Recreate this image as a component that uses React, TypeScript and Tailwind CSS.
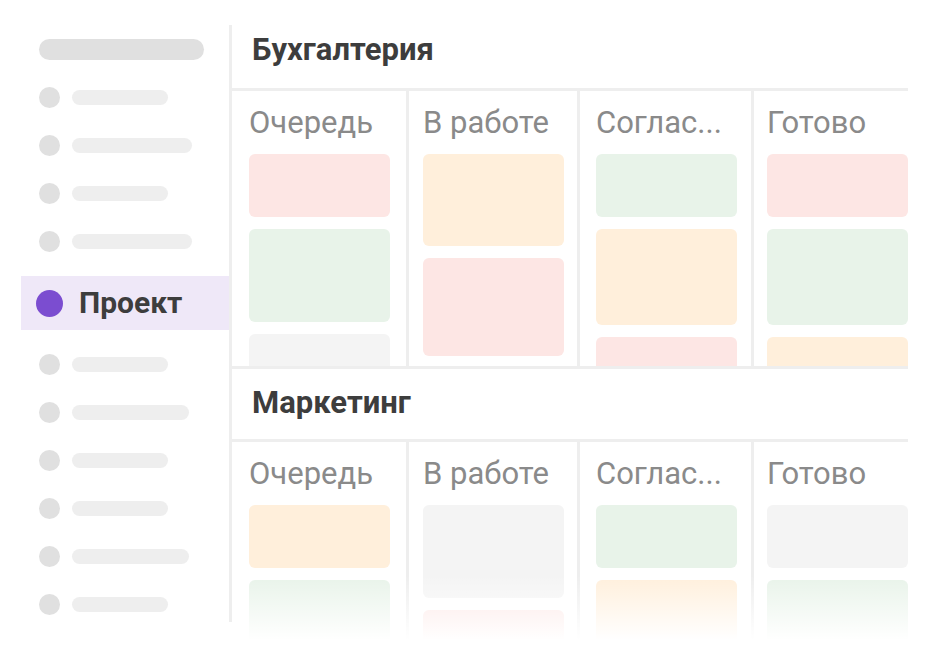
type Tone = "red" | "green" | "orange" | "gray";

type Card = { tone: Tone; h: string };

type Column = {
  title: string;
  box: string;
  cards: Card[];
};

const tones: Record<Tone, string> = {
  red: "bg-[#fde6e4]",
  green: "bg-[#e8f3e9]",
  orange: "bg-[#ffefdb]",
  gray: "bg-[#f4f4f4]",
};

const colBoxes = [
  "w-[177px] pl-[17px] border-r-[3px] border-[#eeeeee]",
  "w-[171px] pl-[14px] border-r-[3px] border-[#eeeeee]",
  "w-[174px] pl-[16px] border-r-[3px] border-[#eeeeee]",
  "flex-1 pl-[13px]",
];

const titles = ["Очередь", "В работе", "Соглас...", "Готово"];

const makeColumns = (cards: Card[][]): Column[] =>
  cards.map((c, i) => ({ title: titles[i], box: colBoxes[i], cards: c }));

const accounting = makeColumns([
  [
    { tone: "red", h: "h-[63px]" },
    { tone: "green", h: "h-[93px]" },
    { tone: "gray", h: "h-[90px]" },
  ],
  [
    { tone: "orange", h: "h-[92px]" },
    { tone: "red", h: "h-[98px]" },
  ],
  [
    { tone: "green", h: "h-[63px]" },
    { tone: "orange", h: "h-[96px]" },
    { tone: "red", h: "h-[90px]" },
  ],
  [
    { tone: "red", h: "h-[63px]" },
    { tone: "green", h: "h-[96px]" },
    { tone: "orange", h: "h-[90px]" },
  ],
]);

const marketing = makeColumns([
  [
    { tone: "orange", h: "h-[63px]" },
    { tone: "green", h: "h-[90px]" },
  ],
  [
    { tone: "gray", h: "h-[93px]" },
    { tone: "red", h: "h-[90px]" },
  ],
  [
    { tone: "green", h: "h-[63px]" },
    { tone: "orange", h: "h-[90px]" },
  ],
  [
    { tone: "gray", h: "h-[63px]" },
    { tone: "green", h: "h-[90px]" },
  ],
]);

const upperRows = ["w-[96px]", "w-[120px]", "w-[96px]", "w-[120px]"];
const lowerRows = [
  "w-[96px]",
  "w-[117px]",
  "w-[96px]",
  "w-[96px]",
  "w-[117px]",
  "w-[96px]",
];

const SkeletonRow = ({ width }: { width: string }) => (
  <div className="h-[48px] shrink-0 flex items-center pl-[18px] gap-[12px]">
    <div className="w-[21px] h-[21px] rounded-full bg-[#e0e0e0]" />
    <div className={`h-[15px] rounded-full bg-[#eeeeee] ${width}`} />
  </div>
);

const Sidebar = () => (
  <div className="w-[211px] h-[597px] shrink-0 border-r-[3px] border-[#eeeeee] pt-[14px] flex flex-col">
    <div className="ml-[18px] w-[165px] h-[21px] shrink-0 rounded-full bg-[#e0e0e0] mb-[13px]" />
    {upperRows.map((w, i) => (
      <SkeletonRow key={i} width={w} />
    ))}
    <div className="mt-[11px] mb-[10px] h-[54px] shrink-0 bg-[#efe8f8] flex items-center pl-[15px] gap-[16px]">
      <div className="w-[27px] h-[27px] rounded-full bg-[#7b4dd0]" />
      <span className="text-[30px] leading-[30px] font-bold text-[#3d3d3d]">
        Проект
      </span>
    </div>
    {lowerRows.map((w, i) => (
      <SkeletonRow key={i} width={w} />
    ))}
  </div>
);

const BoardColumns = ({ columns }: { columns: Column[] }) => (
  <div className="flex h-full">
    {columns.map((col) => (
      <div key={col.title} className={`${col.box} pt-[17px] overflow-hidden`}>
        <div className="text-[31px] leading-[30px] text-[#8a8a8a] whitespace-nowrap">
          {col.title}
        </div>
        <div className="mt-[16px] flex flex-col gap-[12px]">
          {col.cards.map((card, i) => (
            <div
              key={i}
              className={`w-[141px] shrink-0 rounded-[6px] ${tones[card.tone]} ${card.h}`}
            />
          ))}
        </div>
      </div>
    ))}
  </div>
);

export default function App() {
  return (
    <div
      className="w-[942px] h-[660px] bg-white flex pt-[25px] pl-[21px] overflow-hidden"
      style={{ fontFamily: "Roboto, 'Noto Sans', sans-serif" }}
    >
      <Sidebar />
      <div className="relative w-[676px] flex flex-col">
        <div className="h-[66px] shrink-0 pl-[20px] pt-[10px] border-b-[3px] border-[#eeeeee]">
          <h2 className="text-[31px] leading-[30px] font-bold text-[#3d3d3d]">
            Бухгалтерия
          </h2>
        </div>
        <div className="h-[278px] shrink-0 border-b-[3px] border-[#eeeeee] overflow-hidden">
          <BoardColumns columns={accounting} />
        </div>
        <div className="h-[73px] shrink-0 pl-[20px] pt-[19px] border-b-[3px] border-[#eeeeee]">
          <h2 className="text-[31px] leading-[30px] font-bold text-[#3d3d3d]">
            Маркетинг
          </h2>
        </div>
        <div className="flex-1 overflow-hidden">
          <BoardColumns columns={marketing} />
        </div>
        {/* fade the bottom of the board into the page */}
        <div className="absolute left-0 right-0 top-[550px] h-[65px] bg-gradient-to-b from-white/0 to-white" />
        <div className="absolute left-0 right-0 top-[615px] bottom-0 bg-white" />
      </div>
    </div>
  );
}
